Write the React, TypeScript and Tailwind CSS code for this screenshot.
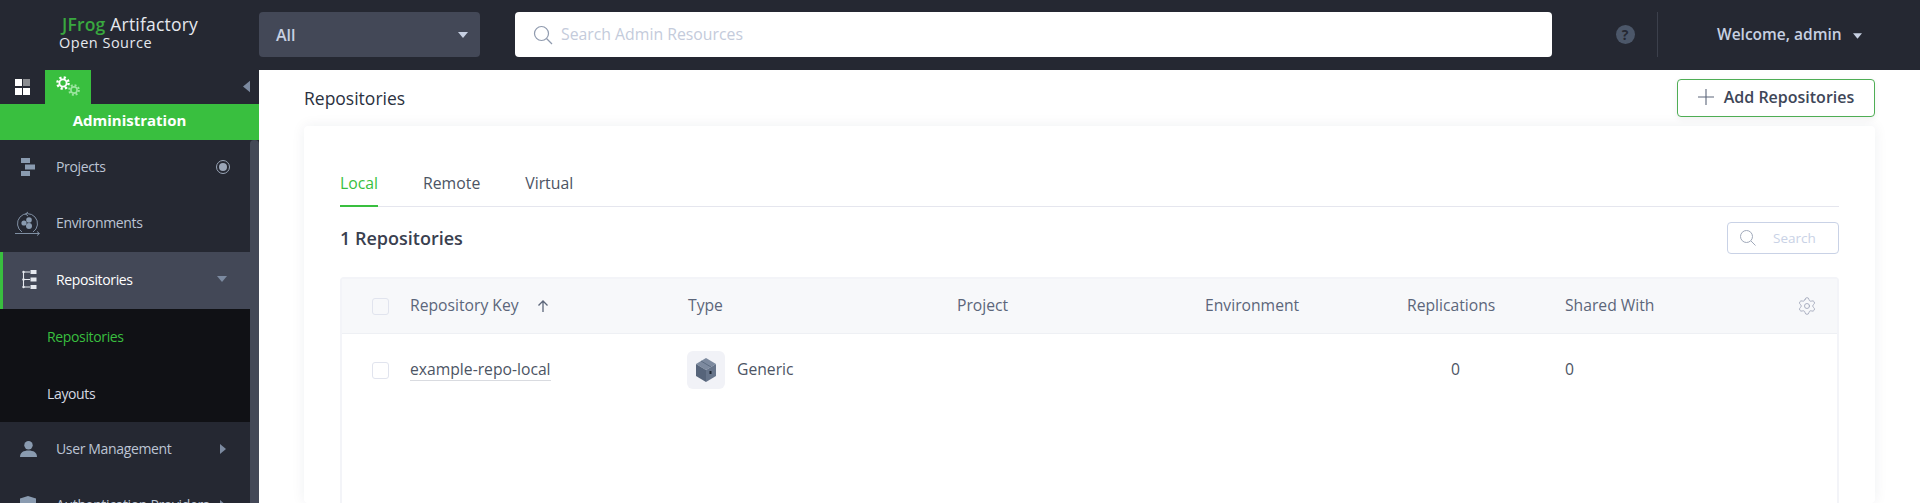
import { Settings } from 'lucide-react';

const font = { fontFamily: '"Open Sans", sans-serif' };

function Caret({ dir = 'down', className = '' }: { dir?: 'down' | 'right' | 'left'; className?: string }) {
  const points = dir === 'down' ? '0,0 10,0 5,6' : dir === 'right' ? '0,0 6,5 0,10' : '6,0 0,5 6,10';
  const box = dir === 'down' ? '0 0 10 6' : '0 0 6 10';
  return (
    <svg viewBox={box} className={className} fill="currentColor">
      <polygon points={points} strokeLinejoin="round" />
    </svg>
  );
}

function Gear({ className = '' }: { className?: string }) {
  return (
    <svg viewBox="0 0 24 24" className={className} fill="none" stroke="currentColor">
      <circle cx="12" cy="12" r="6.2" strokeWidth="3.2" />
      <circle cx="12" cy="12" r="9.6" strokeWidth="4.2" strokeDasharray="3.8 3.74" />
    </svg>
  );
}

function ProjectsIcon() {
  return (
    <svg viewBox="0 0 14 18" className="w-[14px] h-[18px]" fill="#8a9bb0">
      <rect x="0" y="0" width="9" height="5" />
      <rect x="4" y="6.5" width="10" height="5" />
      <rect x="0" y="13" width="9" height="5" />
    </svg>
  );
}

function EnvironmentsIcon() {
  return (
    <svg viewBox="0 0 26 26" className="w-[26px] h-[26px] mt-[3px]" fill="none" stroke="#8a9bb0" strokeWidth="0.9">
      <path d="M7 21 A10 10 0 1 1 18 21" />
      <path d="M0 22.5 H24 M22 20.5 L24.5 22.5 L22 24.5 M13 1 L10.5 3 L13 5" />
      <g fill="#8a9bb0" stroke="none">
        <circle cx="9" cy="12" r="2.6" />
        <circle cx="14" cy="9" r="2.8" />
        <circle cx="14" cy="15" r="3" />
      </g>
    </svg>
  );
}

function RepositoriesIcon() {
  return (
    <svg viewBox="0 0 15 19" className="w-[15px] h-[19px]" fill="#e6e9ef" stroke="#e6e9ef">
      <path d="M1.5 1.5 V17 M1.5 2 H8 M1.5 9.5 H8 M1.5 17 H8" strokeWidth="1.1" fill="none" />
      <rect x="8.5" y="0" width="6" height="4" stroke="none" />
      <rect x="8.5" y="7.5" width="6" height="4" stroke="none" />
      <rect x="8.5" y="15" width="6" height="4" stroke="none" />
      <circle cx="1.5" cy="2" r="1.2" stroke="none" />
      <circle cx="1.5" cy="9.5" r="1.2" stroke="none" />
      <circle cx="1.5" cy="17" r="1.2" stroke="none" />
    </svg>
  );
}

function UserIcon() {
  return (
    <svg viewBox="0 0 17 16" className="w-[17px] h-[16px]" fill="#8a9bb0">
      <circle cx="8.5" cy="4.2" r="4.2" />
      <path d="M0 16 C0 11.5 3.5 9.5 8.5 9.5 C13.5 9.5 17 11.5 17 16 Z" />
    </svg>
  );
}

function ShieldIcon() {
  return (
    <svg viewBox="0 0 16 18" className="w-[16px] h-[18px]" fill="#8a9bb0">
      <path d="M8 0 L16 2.5 V9 C16 13 12 16.5 8 18 C4 16.5 0 13 0 9 V2.5 Z" />
    </svg>
  );
}

function BoxIcon() {
  return (
    <svg viewBox="0 0 20 24" className="w-[20px] h-[24px]">
      <polygon points="10,0 20,6 10,12 0,6" fill="#7d8a9f" />
      <polygon points="0,6 10,12 10,24 0,18" fill="#56647a" />
      <polygon points="20,6 10,12 10,24 20,18" fill="#66748a" />
      <path d="M5 3 L15 9" stroke="#56647a" strokeWidth="0.8" />
      <rect x="13.5" y="13" width="2" height="3" fill="#1f2733" />
    </svg>
  );
}

function SideItem({ icon, label, right }: { icon: React.ReactNode; label: string; right?: React.ReactNode }) {
  return (
    <div className="h-[56px] shrink-0 flex items-center pb-[3px] pr-[24px] text-[14px] tracking-[-0.35px] text-[#bcc4d4]">
      <div className="w-[56px] flex justify-center shrink-0">{icon}</div>
      <span className="flex-1 whitespace-nowrap">{label}</span>
      {right}
    </div>
  );
}

function Sidebar() {
  return (
    <aside className="w-[259px] shrink-0 bg-[#252832] flex flex-col overflow-hidden">
      <div className="h-[34px] shrink-0 flex relative">
        <div className="w-[45px] flex items-center justify-center">
          <div className="grid grid-cols-2 gap-[1.5px] w-[16px]">
            <span className="w-[7px] h-[7px] bg-white" />
            <span className="w-[7px] h-[7px] bg-[#8a8c90]" />
            <span className="w-[7px] h-[7px] bg-white" />
            <span className="w-[7px] h-[7px] bg-white" />
          </div>
        </div>
        <div className="w-[46px] bg-[#39bf3f] relative">
          <Gear className="absolute left-[11px] top-[6px] w-[14px] h-[14px] text-white" />
          <Gear className="absolute left-[23px] top-[14px] w-[12px] h-[12px] text-[#9be49f]" />
        </div>
        <Caret dir="left" className="absolute left-[243px] top-[10px] w-[7px] h-[13px] text-[#7c8aa0]" />
      </div>
      <div className="h-[36px] shrink-0 bg-[#39bf3f] flex items-center justify-center pb-[3px] text-[15px] font-bold text-white">
        Administration
      </div>
      <div className="flex-1 flex min-h-0">
        <div className="w-[250px] shrink-0 flex flex-col">
          <SideItem
            icon={<ProjectsIcon />}
            label="Projects"
            right={
              <span className="w-[14px] h-[14px] -mr-[4px] rounded-full border border-[#9ba6b8] flex items-center justify-center">
                <span className="w-[8px] h-[8px] rounded-full bg-[#9ba6b8]" />
              </span>
            }
          />
          <SideItem icon={<EnvironmentsIcon />} label="Environments" />
          <div className="h-[57px] shrink-0 bg-[#434857] border-l-[3px] border-[#39bf3f] flex items-center pb-[3px] pr-[24px] text-[14px] tracking-[-0.35px] text-white">
            <div className="w-[53px] flex justify-center shrink-0">
              <RepositoriesIcon />
            </div>
            <span className="flex-1">Repositories</span>
            <Caret className="w-[10px] h-[6px] -mr-[1px] text-[#7c8aa0]" />
          </div>
          <div className="h-[113px] shrink-0 bg-[#101115] flex flex-col pl-[47px] text-[14px] tracking-[-0.35px]">
            <div className="h-[57px] flex items-center pb-[2px] text-[#39bf3f]">Repositories</div>
            <div className="h-[56px] flex items-center pb-[2px] text-[#d5d9e2]">Layouts</div>
          </div>
          <SideItem icon={<UserIcon />} label="User Management" right={<Caret dir="right" className="w-[6px] h-[10px] text-[#7c8aa0]" />} />
          <SideItem icon={<ShieldIcon />} label="Authentication Providers" right={<Caret dir="right" className="w-[6px] h-[10px] text-[#7c8aa0]" />} />
        </div>
        <div className="w-[9px] bg-[#434857] rounded-t-[4px]" />
      </div>
    </aside>
  );
}

function Header() {
  return (
    <header className="h-[70px] bg-[#252832] flex items-start pt-[12px] shrink-0">
      <div className="w-[259px] pl-[59px] text-[#e6e9ef] -mt-[1px]">
        <div className="text-[17.5px] leading-[20px] tracking-[0.2px] whitespace-nowrap pl-[3px] mt-[3px]">
          <span className="text-[#39a83f] font-semibold">JFrog</span> Artifactory
        </div>
        <div className="text-[14.5px] leading-[18px] tracking-[0.5px] whitespace-nowrap">Open Source</div>
      </div>
      <div className="w-[221px] h-[45px] rounded-[4px] bg-[#434857] flex items-center justify-between pl-[17px] pr-[12px] text-[16px] font-semibold text-[#c7d0e2]">
        All
        <Caret className="w-[10px] h-[6px] text-[#c7d0e2]" />
      </div>
      <div className="ml-[35px] w-[1037px] h-[45px] rounded-[4px] bg-white flex items-center pl-[18px] text-[15.8px] text-[#c4cbdb]">
        <svg viewBox="0 0 20 20" className="w-[20px] h-[20px] mr-[8px]" fill="none" stroke="#8f9aae" strokeWidth="1.2">
          <circle cx="8.5" cy="8.5" r="7" />
          <path d="M13.5 13.5 L19 19" />
        </svg>
        Search Admin Resources
      </div>
      <div className="w-[106px] flex items-center justify-center h-[45px] relative">
        <span className="w-[19px] h-[19px] ml-[40px] rounded-full bg-[#4c5769] flex items-center justify-center text-[14px] font-bold leading-none text-[#252832]">?</span>
        <span className="absolute right-0 top-0 h-[45px] w-px bg-[#3c404c]" />
      </div>
      <div className="ml-[59px] h-[45px] flex items-center text-[15.5px] font-semibold text-[#c7d0e2] whitespace-nowrap">
        Welcome, admin
        <Caret className="w-[9px] h-[6px] ml-[11px] mt-[2px]" />
      </div>
    </header>
  );
}

function RepoTable() {
  const cols = 'grid grid-cols-[68px_278px_269px_248px_202px_158px_1fr] items-center text-[15.7px]';
  return (
    <div className="mt-[23px] flex-1 border-[2px] border-b-0 border-[#f3f4f8] rounded-t-[4px]">
      <div className={`${cols} h-[55px] bg-[#f7f8fa] border-b-[1px] border-[#eef0f4] text-[#5c667a]`}>
        <span className="pl-[30px]">
          <span className="block w-[17px] h-[17px] rounded-[3px] border border-[#e1e4ee] bg-[#f7f8fa]" />
        </span>
        <span className="flex items-center">
          Repository Key
          <svg viewBox="0 0 12 12" className="w-[12px] h-[12px] ml-[18px]" fill="none" stroke="#5c667a" strokeWidth="1.3">
            <path d="M6 12 V1 M1.5 5.5 L6 1 L10.5 5.5" />
          </svg>
        </span>
        <span>Type</span>
        <span>Project</span>
        <span>Environment</span>
        <span>Replications</span>
        <span className="flex items-center justify-between pr-[20px]">
          Shared With
          <Settings className="w-[20px] h-[20px] text-[#a3a8bb]" strokeWidth={1.1} />
        </span>
      </div>
      <div className={`${cols} h-[72px] text-[#4c5464]`}>
        <span className="pl-[30px]">
          <span className="block w-[17px] h-[17px] rounded-[3px] border border-[#e1e4ee]" />
        </span>
        <span>
          <span className="border-b border-[#d9dbe0]">example-repo-local</span>
        </span>
        <span className="flex items-center gap-[12px]">
          <span className="w-[38px] h-[38px] rounded-[6px] bg-[#f1f2f7] flex items-center justify-center -ml-[1px]">
            <BoxIcon />
          </span>
          Generic
        </span>
        <span />
        <span />
        <span className="pl-[44px]">0</span>
        <span>0</span>
      </div>
    </div>
  );
}

function Main() {
  return (
    <main className="flex-1 min-w-0 bg-white flex flex-col pl-[45px] pr-[45px] overflow-hidden">
      <div className="h-[56px] shrink-0 flex items-start justify-between">
        <h1 className="text-[17.5px] leading-[24px] mt-[16px] text-[#2b3140]">Repositories</h1>
        <button className="mt-[9px] w-[198px] h-[38px] rounded-[4px] border border-[#4fae55] bg-white flex items-center justify-center pb-[3px] text-[16px] font-semibold text-[#3e4658] shadow-[0_2px_6px_rgba(0,0,0,0.06)]">
          <svg viewBox="0 0 16 16" className="w-[16px] h-[16px] mr-[10px]" fill="none" stroke="#5c667a" strokeWidth="1.1">
            <path d="M8 0 V16 M0 8 H16" />
          </svg>
          Add Repositories
        </button>
      </div>
      <section className="flex-1 min-h-0 flex flex-col px-[36px] pt-[43px] rounded-[4px] bg-white shadow-[0_0_14px_rgba(30,40,70,0.07)]">
        <div className="h-[38px] shrink-0 flex text-[15.8px] leading-[29px] border-b-[1px] border-[#e5e6ee] text-[#4c5464]">
          <span className="w-[38px] h-[38px] mr-[45px] text-[#39bf3f] border-b-[2px] border-[#39bf3f]">Local</span>
          <span className="mr-[45px]">Remote</span>
          <span>Virtual</span>
        </div>
        <div className="mt-[15px] h-[32px] shrink-0 flex items-center justify-between">
          <span className="text-[18px] font-semibold text-[#39404f]">1 Repositories</span>
          <div className="w-[112px] h-[32px] rounded-[4px] border border-[#c9d2e6] flex items-center pl-[12px] text-[13.5px] text-[#c9d2e6]">
            <svg viewBox="0 0 16 16" className="w-[16px] h-[16px] mr-[17px]" fill="none" stroke="#a0a9ba" strokeWidth="1">
              <circle cx="6.5" cy="6.5" r="6" />
              <path d="M11 11 L15.5 15.5" />
            </svg>
            Search
          </div>
        </div>
        <RepoTable />
      </section>
    </main>
  );
}

export default function App() {
  return (
    <div className="h-screen flex flex-col overflow-hidden" style={font}>
      <Header />
      <div className="flex-1 flex min-h-0">
        <Sidebar />
        <Main />
      </div>
    </div>
  );
}
